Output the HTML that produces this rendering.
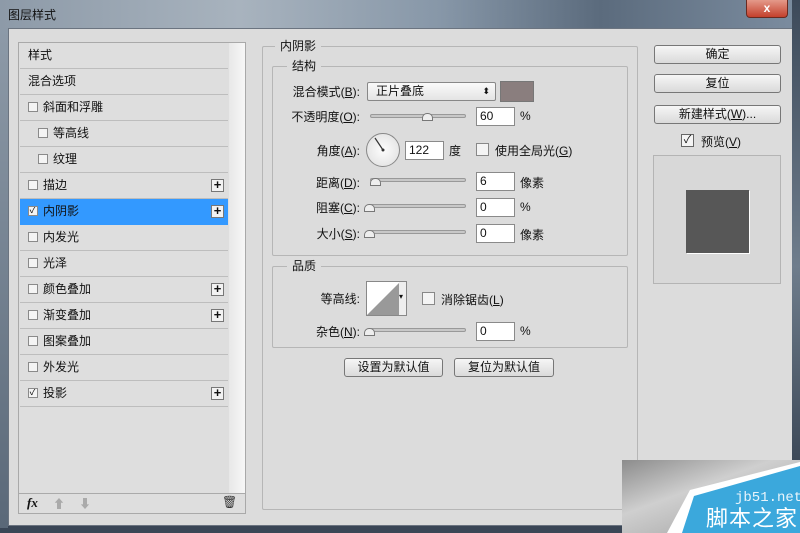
<!DOCTYPE html>
<html><head><meta charset="utf-8"><style>
*{box-sizing:border-box;margin:0;padding:0}
body{width:800px;height:533px;overflow:hidden;background:#2c3a4c;font-family:"Liberation Sans","Noto Sans CJK SC",sans-serif;font-size:12px;color:#111;position:relative}
.abs{position:absolute}
#title{left:0;top:0;width:800px;height:30px;background:linear-gradient(90deg,#8d9aa8,#a8b3be 30%,#8797a8 55%,#5b6b7d 75%,#7c8da0 100%)}
#dlg{left:8px;top:28px;width:785px;height:498px;background:#dcdcdc;border:1px solid #6b7480}
#list{left:18px;top:42px;width:228px;height:472px;border:1px solid #a9a9a9;background:#dedede}
.row{position:absolute;left:1px;width:208px;height:26px;border-bottom:1px solid #bdbdbd;line-height:25px;padding-left:8px}
.cb{display:inline-block;width:10px;height:10px;border:1px solid #8a8a8a;background:#f4f4f4;vertical-align:-1px;margin-right:5px;font-size:10px;line-height:8px;text-align:center;overflow:hidden}
.plus{position:absolute;right:4px;top:6px;width:13px;height:13px;border:1px solid #777;background:#f2f2f2;font-size:13px;line-height:10px;text-align:center;font-weight:bold}
.btn{position:absolute;border:1px solid #777;border-radius:3px;background:linear-gradient(#f6f6f6,#dadada);text-align:center;line-height:17px;height:19px}
.grp{position:absolute;border:1px solid #b6b6b6;border-radius:2px}
.lg{position:absolute;background:#dcdcdc;padding:0 5px;top:-9px;line-height:16px}
.lab{position:absolute;text-align:right;line-height:16px}
.sl{position:absolute;height:4px;border:1px solid #999;background:#c8c8c8;border-radius:2px}
.inp{position:absolute;height:19px;border:1px solid #8a8a8a;background:#fff;line-height:17px;padding-left:3px}
</style></head><body>
<div id="title" class="abs"></div>
<div class="abs" style="left:8px;top:6px;color:#111;font-size:12px">图层样式</div>
<div class="abs" style="left:746px;top:0;width:42px;height:18px;background:linear-gradient(#e49a8a,#c4402c);border:1px solid #6a2a20;border-top:none;border-radius:0 0 4px 4px;color:#fff;text-align:center;font-weight:bold;line-height:16px">x</div>
<div id="dlg" class="abs"></div>
<div id="list" class="abs">
<div class="abs" style="left:210px;top:0;width:16px;height:450px;background:linear-gradient(90deg,#e8e8e8,#f7f7f7)"></div>
<div class="row" style="top:0">样式</div>
<div class="row" style="top:26px">混合选项</div>
<div class="row" style="top:52px"><span class="cb"></span>斜面和浮雕</div>
<div class="row" style="top:78px;padding-left:18px"><span class="cb"></span>等高线</div>
<div class="row" style="top:104px;padding-left:18px"><span class="cb"></span>纹理</div>
<div class="row" style="top:130px"><span class="cb"></span>描边<span class="plus">+</span></div>
<div class="row" style="top:156px;background:#3399ff;border-color:#3399ff"><span class="cb">✓</span>内阴影<span class="plus">+</span></div>
<div class="row" style="top:182px"><span class="cb"></span>内发光</div>
<div class="row" style="top:208px"><span class="cb"></span>光泽</div>
<div class="row" style="top:234px"><span class="cb"></span>颜色叠加<span class="plus">+</span></div>
<div class="row" style="top:260px"><span class="cb"></span>渐变叠加<span class="plus">+</span></div>
<div class="row" style="top:286px"><span class="cb"></span>图案叠加</div>
<div class="row" style="top:312px"><span class="cb"></span>外发光</div>
<div class="row" style="top:338px"><span class="cb">✓</span>投影<span class="plus">+</span></div>
<div class="abs" style="left:0;top:450px;width:226px;border-top:1px solid #aaa;height:20px"></div>
<div class="abs" style="left:8px;top:452px;font-style:italic;font-weight:bold;font-family:'Liberation Serif',serif;font-size:13px">fx</div>
<div class="abs" style="left:34px;top:452px;color:#aaa">⬆</div>
<div class="abs" style="left:60px;top:452px;color:#aaa">⬇</div>
<div class="abs" style="left:203px;top:452px;color:#333">🗑</div>
</div>

<div class="grp" style="left:262px;top:46px;width:376px;height:464px"><span class="lg" style="left:12px">内阴影</span></div>
<div class="grp" style="left:272px;top:66px;width:356px;height:190px"><span class="lg" style="left:14px">结构</span></div>
<div class="lab" style="left:272px;width:88px;top:84px">混合模式(<u>B</u>):</div>
<div class="abs" style="left:367px;top:82px;width:129px;height:19px;border:1px solid #888;border-radius:2px;background:linear-gradient(#fafafa,#e4e4e4);padding-left:8px;line-height:17px">正片叠底<span style="position:absolute;right:5px;font-size:9px">⬍</span></div>
<div class="abs" style="left:500px;top:81px;width:34px;height:21px;background:#8a7e7e;border:1px solid #777"></div>
<div class="lab" style="left:272px;width:88px;top:109px">不透明度(<u>O</u>):</div>
<div class="sl" style="left:370px;top:114px;width:96px"></div>
<div class="abs" style="left:422px;top:113px;width:11px;height:8px;border:1px solid #777;background:#eee;border-radius:5px 5px 0 0"></div>
<div class="inp" style="left:476px;top:107px;width:39px">60</div><div class="abs" style="left:520px;top:109px">%</div>
<div class="lab" style="left:272px;width:88px;top:143px">角度(<u>A</u>):</div>
<div class="abs" style="left:366px;top:133px;width:34px;height:34px;border:1px solid #888;border-radius:50%;background:radial-gradient(#fdfdfd,#ddd)"></div>
<svg class="abs" style="left:366px;top:133px" width="34" height="34"><line x1="17" y1="17" x2="9" y2="5" stroke="#333" stroke-width="1.2"/><circle cx="17" cy="17" r="1.5" fill="#333"/></svg>
<div class="inp" style="left:405px;top:141px;width:39px">122</div><div class="abs" style="left:449px;top:142px">度</div>
<div class="abs" style="left:476px;top:143px;width:13px;height:13px;border:1px solid #888;background:#f4f4f4"></div>
<div class="abs" style="left:495px;top:142px">使用全局光(<u>G</u>)</div>
<div class="lab" style="left:272px;width:88px;top:175px">距离(<u>D</u>):</div>
<div class="sl" style="left:370px;top:178px;width:96px"></div>
<div class="abs" style="left:370px;top:178px;width:11px;height:8px;border:1px solid #777;background:#eee;border-radius:5px 5px 0 0"></div>
<div class="inp" style="left:476px;top:172px;width:39px">6</div><div class="abs" style="left:520px;top:174px">像素</div>
<div class="lab" style="left:272px;width:88px;top:200px">阻塞(<u>C</u>):</div>
<div class="sl" style="left:370px;top:204px;width:96px"></div>
<div class="abs" style="left:364px;top:204px;width:11px;height:8px;border:1px solid #777;background:#eee;border-radius:5px 5px 0 0"></div>
<div class="inp" style="left:476px;top:198px;width:39px">0</div><div class="abs" style="left:520px;top:200px">%</div>
<div class="lab" style="left:272px;width:88px;top:226px">大小(<u>S</u>):</div>
<div class="sl" style="left:370px;top:230px;width:96px"></div>
<div class="abs" style="left:364px;top:230px;width:11px;height:8px;border:1px solid #777;background:#eee;border-radius:5px 5px 0 0"></div>
<div class="inp" style="left:476px;top:224px;width:39px">0</div><div class="abs" style="left:520px;top:226px">像素</div>

<div class="grp" style="left:272px;top:266px;width:356px;height:82px"><span class="lg" style="left:14px">品质</span></div>
<div class="lab" style="left:272px;width:88px;top:291px">等高线:</div>
<div class="abs" style="left:366px;top:281px;width:41px;height:35px;border:1px solid #888;background:#fff"></div>
<svg class="abs" style="left:367px;top:282px" width="33" height="33"><polygon points="0,33 33,0 33,33" fill="#999"/></svg>
<div class="abs" style="left:399px;top:282px;width:7px;height:33px;background:#eee;font-size:8px;line-height:30px">▾</div>
<div class="abs" style="left:422px;top:292px;width:13px;height:13px;border:1px solid #888;background:#f4f4f4"></div>
<div class="abs" style="left:441px;top:291px">消除锯齿(<u>L</u>)</div>
<div class="lab" style="left:272px;width:88px;top:324px">杂色(<u>N</u>):</div>
<div class="sl" style="left:370px;top:328px;width:96px"></div>
<div class="abs" style="left:364px;top:328px;width:11px;height:8px;border:1px solid #777;background:#eee;border-radius:5px 5px 0 0"></div>
<div class="inp" style="left:476px;top:322px;width:39px">0</div><div class="abs" style="left:520px;top:324px">%</div>
<div class="btn" style="left:344px;top:358px;width:99px">设置为默认值</div>
<div class="btn" style="left:454px;top:358px;width:100px">复位为默认值</div>

<div class="btn" style="left:654px;top:45px;width:127px">确定</div>
<div class="btn" style="left:654px;top:74px;width:127px">复位</div>
<div class="btn" style="left:654px;top:105px;width:127px">新建样式(<u>W</u>)...</div>
<div class="abs" style="left:681px;top:134px;width:13px;height:13px;border:1px solid #666;background:#f4f4f4;font-size:11px;line-height:11px;text-align:center">✓</div>
<div class="abs" style="left:701px;top:133px">预览(<u>V</u>)</div>
<div class="abs" style="left:653px;top:155px;width:128px;height:129px;border:1px solid #b4b4b4;background:#d8d8d8"></div>
<div class="abs" style="left:686px;top:190px;width:63px;height:63px;background:#575757;box-shadow:1px 1px 0 #fff"></div>

<div class="abs" style="left:792px;top:0;width:8px;height:533px;background:linear-gradient(#3d4a5a,#6f7d8c,#2a3544)"></div>
<div class="abs" style="left:0;top:526px;width:800px;height:7px;background:#3a4656"></div>
<div class="abs" style="left:0;top:28px;width:8px;height:500px;background:linear-gradient(#8d9aa8,#5a6878)"></div>
<div class="abs" style="left:622px;top:460px;width:178px;height:73px;background:linear-gradient(160deg,#8c8c8c,#cfcfcf 40%,#9a9a9a)"></div>
<svg class="abs" style="left:622px;top:460px" width="178" height="73"><polygon points="45,73 68,30 178,2 178,73" fill="#fff"/><polygon points="60,73 72,36 178,6 178,73" fill="#3ba8dc"/></svg>
<div class="abs" style="left:735px;top:490px;color:#e8f4fb;font-size:14px;font-family:'Liberation Mono',monospace">jb51.net</div>
<div class="abs" style="left:706px;top:506px;color:#fff;font-size:22px;line-height:26px;letter-spacing:1px">脚本之家</div>
</body></html>
